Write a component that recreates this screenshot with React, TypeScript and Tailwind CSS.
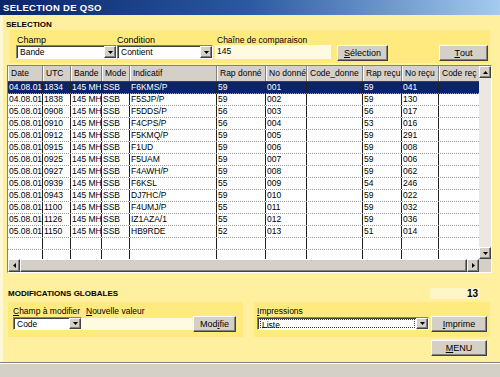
import React from 'react'

const rows = [
  ['04.08.01', '1834', '145 MH', 'SSB', 'F6KMS/P', '59', '001', '', '59', '041', ''],
  ['04.08.01', '1838', '145 MH', 'SSB', 'F5SJP/P', '59', '002', '', '59', '130', ''],
  ['05.08.01', '0908', '145 MH', 'SSB', 'F5DDS/P', '56', '003', '', '56', '017', ''],
  ['05.08.01', '0910', '145 MH', 'SSB', 'F4CPS/P', '56', '004', '', '53', '016', ''],
  ['05.08.01', '0912', '145 MH', 'SSB', 'F5KMQ/P', '59', '005', '', '59', '291', ''],
  ['05.08.01', '0915', '145 MH', 'SSB', 'F1UD', '59', '006', '', '59', '008', ''],
  ['05.08.01', '0925', '145 MH', 'SSB', 'F5UAM', '59', '007', '', '59', '006', ''],
  ['05.08.01', '0927', '145 MH', 'SSB', 'F4AWH/P', '59', '008', '', '59', '062', ''],
  ['05.08.01', '0939', '145 MH', 'SSB', 'F6KSL', '55', '009', '', '54', '246', ''],
  ['05.08.01', '0943', '145 MH', 'SSB', 'DJ7HC/P', '59', '010', '', '59', '022', ''],
  ['05.08.01', '1100', '145 MH', 'SSB', 'F4UMJ/P', '55', '011', '', '59', '032', ''],
  ['05.08.01', '1126', '145 MH', 'SSB', 'IZ1AZA/1', '55', '012', '', '59', '036', ''],
  ['05.08.01', '1150', '145 MH', 'SSB', 'HB9RDE', '52', '013', '', '51', '014', ''],
]

const heads = ['Date', 'UTC', 'Bande', 'Mode', 'Indicatif', 'Rap donné', 'No donné', 'Code_donne', 'Rap reçu', 'No reçu', 'Code reç']

const COLS = 'grid grid-cols-[35px_28px_31px_28px_87px_49px_41px_56px_39px_37px_50px]'

function Arrow({ dir }: { dir: 'down' | 'up' | 'left' | 'right' }) {
  const d = {
    down: 'M0 0h5L2.5 3z',
    up: 'M0 3h5L2.5 0z',
    left: 'M3 0v5L0 2.5z',
    right: 'M0 0v5L3 2.5z',
  }[dir]
  const vert = dir === 'down' || dir === 'up'
  return (
    <svg width={vert ? 5 : 3} height={vert ? 3 : 5} viewBox={vert ? '0 0 5 3' : '0 0 3 5'}>
      <path d={d} fill="#000" />
    </svg>
  )
}

function RaisedBox({ className, children }: { className: string; children?: React.ReactNode }) {
  return (
    <div className={`bg-[#d4d0c8] border border-t-white border-l-white border-r-[#404040] border-b-[#404040] shadow-[inset_-1px_-1px_0_#808080] flex items-center justify-center ${className}`}>
      {children}
    </div>
  )
}

function Combo({ value, className, focus }: { value: string; className: string; focus?: boolean }) {
  return (
    <div className={`flex bg-white border border-t-[#808080] border-l-[#808080] border-r-white border-b-white shadow-[inset_1px_1px_0_#404040] ${className}`}>
      <div className="flex-1 min-w-0 p-[1px] pl-[2px]">
        <div className={`h-full leading-[10px] px-[1px] ${focus ? 'border border-dotted border-[#404040]' : ''}`}>{value}</div>
      </div>
      <RaisedBox className="w-[12px] h-full">
        <Arrow dir="down" />
      </RaisedBox>
    </div>
  )
}

function Btn({ className, children }: { className: string; children: React.ReactNode }) {
  return <RaisedBox className={`leading-[10px] text-[9px] text-black ${className}`}>{children}</RaisedBox>
}

function Grid() {
  const empty = ['', '', '', '', '', '', '', '', '', '', '']
  const all = [...rows, empty, empty, empty]
  return (
    <div className="ml-[4px] mt-[2px] w-[485px] h-[208px] border border-t-[#808080] border-l-[#808080] border-r-white border-b-white flex flex-col bg-white">
      <div className="flex h-[193px]">
        <div className="w-[471px] overflow-hidden">
          {/* header */}
          <div className={`${COLS} h-[16px] bg-[#d4d0c8] border-b border-[#404040]`}>
            {heads.map((h) => (
              <div key={h} className="border-l border-l-white border-r border-r-[#808080] px-[2px] leading-[15px] whitespace-nowrap overflow-hidden">
                {h}
              </div>
            ))}
          </div>
          {all.map((r, i) => (
            <div
              key={i}
              className={`${COLS} h-[12px] border-b border-dotted border-[#9a9a9a] ${i === 0 ? 'bg-[#0a246a] text-white' : 'text-black'}`}
            >
              {r.map((c, j) => (
                <div key={j} className="border-r border-[#202020] px-[1px] leading-[11px] whitespace-nowrap overflow-hidden">
                  {c}
                </div>
              ))}
            </div>
          ))}
        </div>
        {/* vertical scrollbar */}
        <div className="w-[12px] flex flex-col bg-[#ebe8e2]">
          <RaisedBox className="h-[12px] w-[12px]">
            <Arrow dir="up" />
          </RaisedBox>
          <div className="flex-1" />
          <RaisedBox className="h-[12px] w-[12px]">
            <Arrow dir="down" />
          </RaisedBox>
        </div>
      </div>
      {/* horizontal scrollbar */}
      <div className="flex h-[13px] bg-[#ebe8e2]">
        <RaisedBox className="w-[12px] h-full">
          <Arrow dir="left" />
        </RaisedBox>
        <RaisedBox className="flex-1 h-full" />
        <RaisedBox className="w-[12px] h-full">
          <Arrow dir="right" />
        </RaisedBox>
        <div className="w-[12px] h-full bg-[#d4d0c8]" />
      </div>
    </div>
  )
}

export default function App() {
  return (
    <div className="w-[500px] h-[377px] overflow-hidden flex flex-col bg-[#fff0a0] text-[8.5px] text-black font-['Liberation_Sans',Arial,sans-serif]">
      {/* title bar */}
      <div className="h-[15px] shrink-0 bg-linear-to-r from-[#0a246a] via-[#2c5aa0] to-[#a6caf0] flex items-center pl-[3px]">
        <span className="text-white font-bold text-[9.5px] tracking-[0.3px] leading-[11px]">SELECTION DE QSO</span>
      </div>

      <div className="flex-1 flex flex-col border-l-[3px] border-[#fff8d4]">
        <div className="ml-[3px] mt-[5px] h-[10px] leading-[10px] font-bold text-[8px]">SELECTION</div>

        {/* selection panel */}
        <div className="ml-[7px] w-[480px] h-[33px] bg-[#ffea80] flex items-start pt-[5px] pl-[6px]">
          <div className="flex flex-col w-[101px]">
            <div className="h-[10px] leading-[10px] pl-[1px] text-[9px]">Champ</div>
            <Combo value="Bande" className="w-[101px] h-[14px]" />
          </div>
          <div className="flex flex-col w-[96px]">
            <div className="h-[10px] leading-[10px] text-[9px]">Condition</div>
            <Combo value="Contient" className="w-[96px] h-[14px]" />
          </div>
          <div className="flex flex-col w-[116px] ml-[2px]">
            <div className="h-[10px] leading-[10px] pl-[2px]">Chaîne de comparaison</div>
            <div className="h-[14px] bg-[#fffbe0] leading-[12px] pl-[2px]">145</div>
          </div>
          <Btn className="ml-[6px] mt-[10px] w-[51px] h-[16px]">
            <span className="underline">S</span>élection
          </Btn>
          <Btn className="ml-[51px] mt-[10px] w-[49px] h-[16px]">
            <span className="underline">T</span>out
          </Btn>
        </div>

        <Grid />

        {/* count row */}
        <div className="mt-[14px] h-[12px] flex items-end">
          <div className="ml-[5px] leading-[10px] font-bold text-[8px]">MODIFICATIONS GLOBALES</div>
          <div className="ml-auto mr-[20px] w-[50px] h-[11px] bg-[#fff6c8] text-right pr-[2px] font-bold text-[10px] leading-[11px]">13</div>
        </div>

        {/* modification + print panels */}
        <div className="mt-[3px] h-[35px] flex">
          <div className="ml-[5px] w-[235px] h-full bg-[#ffea80] pt-[4px] pl-[5px]">
            <div className="flex h-[10px] leading-[10px] whitespace-nowrap">
              <div className="w-[73px]">
                <span className="underline">C</span>hamp à modifier
              </div>
              <div>
                <span className="underline">N</span>ouvelle valeur
              </div>
            </div>
            <div className="flex items-start">
              <Combo value="Code" className="mt-[1px] w-[69px] h-[13px]" />
              <div className="mt-[2px] w-[111px] h-[12px] bg-[#fffbe0]" />
              <Btn className="w-[43px] h-[16px]">
                Mod<span className="underline">i</span>fie
              </Btn>
            </div>
          </div>
          <div className="ml-[11px] w-[236px] h-full bg-[#ffea80] pt-[4px] pl-[3px]">
            <div className="h-[10px] leading-[10px]">
              <span className="underline">I</span>mpressions
            </div>
            <div className="flex items-start">
              <Combo value="Liste" focus className="mt-[1px] w-[172px] h-[13px]" />
              <Btn className="ml-[2px] w-[56px] h-[16px]">
                <span className="underline">I</span>mprime
              </Btn>
            </div>
          </div>
        </div>

        <div className="mt-[3px] flex">
          <Btn className="ml-[428px] w-[56px] h-[16px]">
            <span className="underline">M</span>ENU
          </Btn>
        </div>
      </div>

      {/* status bar */}
      <div className="h-[15px] shrink-0 bg-[#d4d0c8] border-t border-[#808080] shadow-[inset_0_1px_0_#ffffff]" />
    </div>
  )
}
